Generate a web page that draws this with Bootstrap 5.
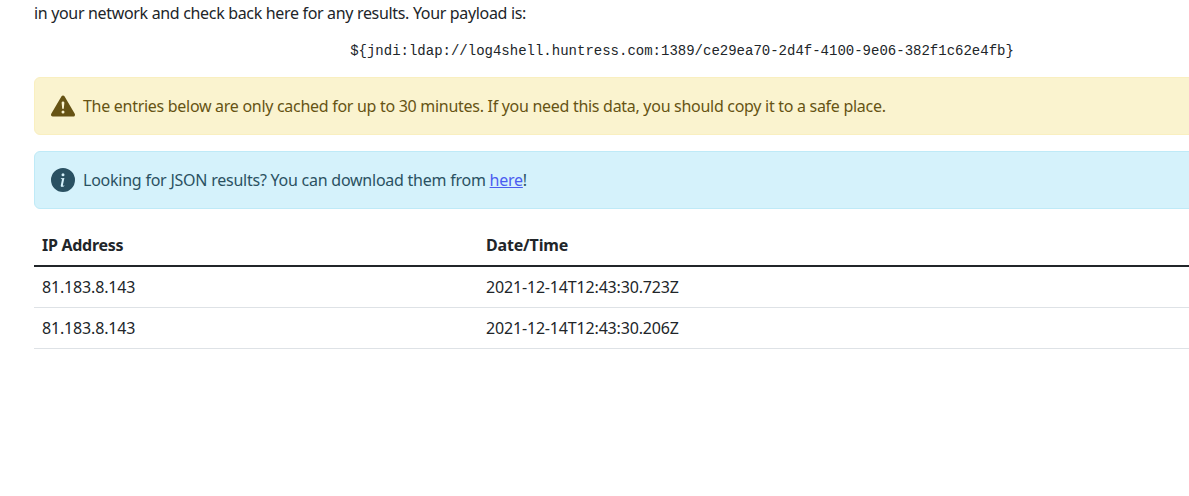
<!DOCTYPE html>
<html lang="en">
<head>
    <meta charset="UTF-8">
    <meta name="viewport" content="width=device-width, initial-scale=1.0">
    <title>Log4Shell Results</title>
    <link href="https://cdn.jsdelivr.net/npm/bootstrap@5.3.0/dist/css/bootstrap.min.css" rel="stylesheet">
    <style>
        html, body {
            overflow: hidden;
        }
        body {
            font-family: "Noto Sans", sans-serif;
            color: #212529;
            letter-spacing: -0.29px;
        }
        .page-wrap {
            width: 1296px;
            margin-left: 34px;
            padding-top: 1px;
        }
        .intro-text {
            margin-bottom: 16px;
            letter-spacing: -0.33px;
        }
        .payload-text {
            font-family: "Liberation Mono", monospace;
            font-size: 14px;
            line-height: 21px;
            letter-spacing: 0;
            text-align: center;
            margin-bottom: 15px;
            color: #212529;
        }
        .note-warning {
            background: #faf3cf;
            border-color: #f9efc0;
            color: #665314;
        }
        .note-info {
            background: #d5f2fb;
            border-color: #bfeaf7;
            color: #2a5162;
            letter-spacing: -0.24px;
        }
        .note-info a {
            color: #4b5cf0;
        }
        .ip-col {
            width: 444px;
            letter-spacing: -0.28px;
        }
        .table th,
        .table td {
            letter-spacing: -0.17px;
        }
        .table th.ip-col {
            letter-spacing: -0.28px;
        }
    </style>
</head>
<body>
    <div class="page-wrap">
        <p class="intro-text">in your network and check back here for any results. Your payload is:</p>
        <p class="payload-text">${jndi:ldap://log4shell.huntress.com:1389/ce29ea70-2d4f-4100-9e06-382f1c62e4fb}</p>

        <div class="alert note-warning d-flex align-items-center" role="alert">
            <svg class="flex-shrink-0 me-2" width="24" height="24" viewBox="0 0 16 16" fill="currentColor" aria-hidden="true">
                <path d="M8.982 1.566a1.13 1.13 0 0 0-1.96 0L.165 13.233c-.457.778.091 1.767.98 1.767h13.713c.889 0 1.438-.99.98-1.767L8.982 1.566zM8 5c.535 0 .954.462.9.995l-.35 3.507a.552.552 0 0 1-1.1 0L7.1 5.995A.905.905 0 0 1 8 5zm.002 6a1 1 0 1 1 0 2 1 1 0 0 1 0-2z"/>
            </svg>
            <div>The entries below are only cached for up to 30 minutes. If you need this data, you should copy it to a safe place.</div>
        </div>

        <div class="alert note-info d-flex align-items-center" role="alert">
            <svg class="flex-shrink-0 me-2" width="24" height="24" viewBox="0 0 16 16" fill="currentColor" aria-hidden="true">
                <path d="M8 16A8 8 0 1 0 8 0a8 8 0 0 0 0 16zm.93-9.412-1 4.705c-.07.34.029.533.304.533.194 0 .487-.07.686-.246l-.088.416c-.287.346-.92.598-1.465.598-.703 0-1.002-.422-.808-1.319l.738-3.468c.064-.293.006-.399-.287-.47l-.451-.081.082-.381 2.29-.287zM8 5.5a1 1 0 1 1 0-2 1 1 0 0 1 0 2z"/>
            </svg>
            <div>Looking for JSON results? You can download them from <a href="#">here</a>!</div>
        </div>

        <table class="table">
            <thead>
                <tr>
                    <th class="ip-col" scope="col">IP Address</th>
                    <th scope="col">Date/Time</th>
                </tr>
            </thead>
            <tbody class="table-group-divider">
                <tr>
                    <td>81.183.8.143</td>
                    <td>2021-12-14T12:43:30.723Z</td>
                </tr>
                <tr>
                    <td>81.183.8.143</td>
                    <td>2021-12-14T12:43:30.206Z</td>
                </tr>
            </tbody>
        </table>
    </div>

    <script src="https://cdn.jsdelivr.net/npm/bootstrap@5.3.0/dist/js/bootstrap.bundle.min.js"></script>
</body>
</html>
